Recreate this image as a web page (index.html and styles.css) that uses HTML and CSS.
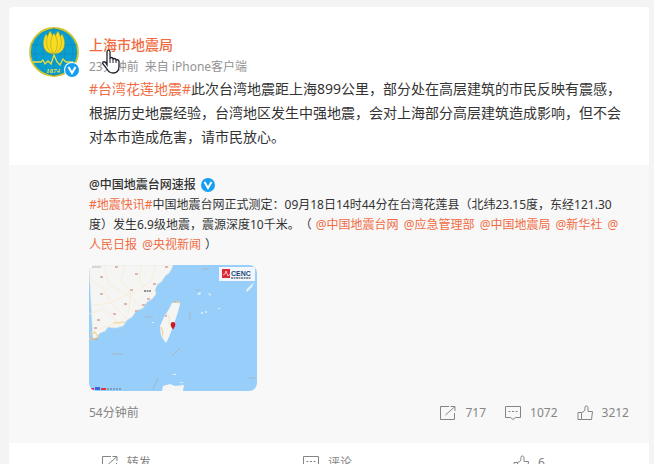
FILE: index.html
```html
<!DOCTYPE html>
<html lang="zh-CN">
<head>
<meta charset="utf-8">
<meta name="viewport" content="width=device-width, initial-scale=1">
<title>上海市地震局</title>
<link rel="stylesheet" href="styles.css">
</head>
<body>
<svg class="defs" aria-hidden="true">
  <symbol id="share" viewBox="0 0 18 16"><path d="M10 1.500H1.500v13h14V8M6.500 10L16 1.500M11.500 1.500H16V6"/></symbol>
  <symbol id="comment" viewBox="0 0 18 16"><path d="M1.500 1.500h15v11h-5L9 14.500l-2.500-2h-5zM4.500 6.500h2M8 6.500h2M11.500 6.500h2"/></symbol>
  <symbol id="like" viewBox="0 0 18 16"><path d="M2 7.500h3.500v7H2zM5.500 7.500c2.500-.5 3.500-2 3.500-4V2c0-1.500 3-1.500 3 .5V6.500h4.500l-1 8h-10"/></symbol>
  <symbol id="verified" viewBox="0 0 16 16"><circle cx="8" cy="8" r="7"/><path d="M4.500 5L8 11l3.500-6"/></symbol>
</svg>
<main class="card">
  <article class="post">
    <a class="avatar" href="#" aria-label="上海市地震局">
      <svg class="avatar-img" viewBox="0 0 50 50" aria-hidden="true">
        <circle cx="25" cy="25" r="24" fill="#0a9fd2" stroke="#d0c52c" stroke-width="1.800"/>
        <g fill="none" stroke="#1585b2" stroke-width=".6"><path d="M2 18h46M2 27h46M5 36h40M25 1v48"/><ellipse cx="25" cy="25" rx="11" ry="23"/><ellipse cx="25" cy="25" rx="19" ry="23"/></g>
        <g fill="#fadb20" stroke="#83a13b" stroke-width=".5">
          <path d="M25 27C12 26 13 14 17 7c4 5 6 12 8 20zM25 27c13-1 12-13 8-20-4 5-6 12-8 20z"/>
          <path d="M24 27C15 21 17 11 21 4c4 5 5 15 3 23zM26 27c9-6 7-16 3-23-4 5-5 15-3 23z"/>
          <path d="M25 27c-5-7-4-15 0-21 4 6 5 14 0 21z"/>
        </g>
        <path d="M4 35h8l2-2 2 4 3-3 3 3 3-9 3 7 3 3 3-6 3 3h7" fill="none" stroke="#eee03b" stroke-width="1.300"/>
        <text x="17" y="46" font-size="7" font-weight="bold" font-style="italic" font-family="Liberation Serif, serif" fill="#eee03b">1874</text>
      </svg>
      <svg class="badge" aria-hidden="true"><use href="#verified"/></svg>
    </a>
    <div class="content">
      <h1 class="name"><a href="#">上海市地震局</a></h1>
      <p class="meta"><span>23分钟前</span><span>来自 iPhone客户端</span></p>
      <p class="text"><a href="#">#台湾花莲地震#</a>此次台湾地震距上海899公里，部分处在高层建筑的市民反映有震感，根据历史地震经验，台湾地区发生中强地震，会对上海部分高层建筑造成影响，但不会对本市造成危害，请市民放心。</p>
    </div>
  </article>
  <section class="quote">
    <h2 class="source"><a href="#">@中国地震台网速报</a><svg class="mark" aria-hidden="true"><use href="#verified"/></svg></h2>
    <p class="quote-text"><a href="#">#地震快讯#</a>中国地震台网正式测定：09月18日14时44分在台湾花莲县（北纬23.15度，东经121.30度）发生6.9级地震，震源深度10千米。（ <a class="mention" href="#">@中国地震台网</a> <a class="mention" href="#">@应急管理部</a> <a class="mention" href="#">@中国地震局</a> <a class="mention" href="#">@新华社</a> <a class="mention" href="#">@人民日报</a> <a class="mention" href="#">@央视新闻</a> ）</p>
    <svg class="map" viewBox="0 0 168 126" role="img" aria-label="震中地图">
      <rect width="168" height="126" fill="#98cefa"/>
      <path d="M0 0h84l-2 5-2 3-4 3-3 5-5 4-2 5 1 4-4 5-5 3-4 6-7 3-4 6-5 3-4 6-8 2-7-1-3 4-5 2-4 5-3 2z" fill="#f5f6f4" stroke="#e4e5df" stroke-width=".7"/>
      <path d="M90 36l-7 2-3 6-5 8-4 9 1 10 5 7 3-6 5-13 4-12 2-8z" fill="#f5f6f4"/>
      <path d="M73 126l1-5 7-2 5 2 9-1-1 6z" fill="#f5f6f4"/>
      <g fill="none" stroke="#f6e8c8" stroke-width=".6"><path d="M1 14l13 9 8 15 16 16M15 1l5 18 18 11 15 12M36 0l-4 16 10 13-3 20M0 49l15-5 11 10 5 8M52 0l-2 17 13 7M67 1l-5 15-16 11-9 3-15 8-18 2M2 67l13-5 17-4 5-7"/></g>
      <path d="M1 70l5-3 3 5-6 3-3-2M24 58l12-1M72 62l2 5-1 5M85 37h6" fill="none" stroke="#f2d294" stroke-width="1.200"/>
      <path d="M77 48q6 4 2 11" fill="none" stroke="#f2dfb4" stroke-width=".8"/>
      <g fill="#dfb3af"><path d="M26 1h3v2h-3zM11 11h3v2h-3zM46 8h3v2h-3zM11 28h3v2h-3zM41 24h3v2h-3zM64 18h3v2h-3zM35 38h3v2h-3zM24 48h3v2h-3zM8 54h3v2H8zM53 39h3v2h-3zM46 45h3v2h-3zM5 62h3v2H5zM76 50h2v2h-2zM58 33h3v2h-3zM76 1h3v2h-3z"/></g>
      <path d="M55 26h7" stroke="#77706d" stroke-width="1.500" stroke-dasharray="2 .6"/>
      <path d="M3 2h9M2 74h7M85 37h5" stroke="#b0a59c" stroke-width="1.200" stroke-dasharray="2 .6"/>
      <g fill="none" stroke="#a6b3c0" stroke-width=".9"><path d="M56 52h8M23 89h11M83 91l8-8M101 46v9M64 124l5-11M113 4h7M106 25h5M160 113h7"/></g>
      <path d="M108 29l3-2 1 2-3 1zM119 28l3 1-1 2zM111 48l3-1v2zM115 47l3-1v2zM129 43h2v1h-2zM157 25l8-8-2 5-5 5zM84 109h3v1h-3zM90 117h5l-2 1zM63 57h2v1h-2z" fill="#e7f1f5"/>
      <path d="M84 63c-2-3-2-5 0-5s2 2 0 5z" fill="#d41525" stroke="#d41525" stroke-width="1.800"/>
      <path d="M130 2h36v14h-36z" fill="#f5f6f9"/>
      <path d="M133 4h8v9h-8z" fill="#db2937"/><path d="M134 10l2-1 1-3 2 5 2-2" fill="none" stroke="#fff" stroke-width=".7"/>
      <text x="142" y="11" font-size="7" font-weight="bold" font-family="Liberation Sans, sans-serif" fill="#164982">CENC</text>
      <path d="M142 13h20" stroke="#647282" stroke-width="1.500" stroke-dasharray="2 .5"/>
      <path d="M2 124h3M12 124h5" stroke="#dc3445" stroke-width="2"/><path d="M6 122h5v3H6z" fill="#3a63e4"/><path d="M18 124h14" stroke="#748daf" stroke-width="1.500" stroke-dasharray="2 1"/>
    </svg>
    <div class="quote-bar">
      <time>54分钟前</time>
      <div class="stats">
        <button type="button" aria-label="转发 717"><svg class="icon" aria-hidden="true"><use href="#share"/></svg>717</button>
        <button type="button" aria-label="评论 1072"><svg class="icon" aria-hidden="true"><use href="#comment"/></svg>1072</button>
        <button type="button" aria-label="赞 3212"><svg class="icon" aria-hidden="true"><use href="#like"/></svg>3212</button>
      </div>
    </div>
  </section>
  <footer class="actions">
    <button type="button"><svg class="icon" aria-hidden="true"><use href="#share"/></svg>转发</button>
    <button type="button"><svg class="icon" aria-hidden="true"><use href="#comment"/></svg>评论</button>
    <button type="button" aria-label="赞 6"><svg class="icon" aria-hidden="true"><use href="#like"/></svg>6</button>
  </footer>
</main>
<svg class="cursor" viewBox="0 0 18 26" aria-hidden="true"><path d="M5 16V3c0-2.500 3-2.500 3 0v7c0-2 3-2 3 0v1c0-2 3-2 3 0v1c0-2 3-1.500 3 .5V17c0 4-2 7-6 7-3 0-4.500-1-6-4l-4-5c-1-2 1-3 2.500-1.500z" fill="#fff" stroke="#22242c" stroke-width="1.300"/><path d="M8 10v4M11 11v3M14 12v2" stroke="#22242c"/></svg>
</body>
</html>
```
FILE: styles.css
```css
* { box-sizing: border-box; }
html { overflow: hidden; }
body {
  margin: 0;
  padding: 7px 5px 0 9px;
  background: #f4f4f4;
  color: #333;
  font-family: "Noto Sans", "Noto Sans CJK SC", sans-serif;
  font-size: 12px;
  line-height: 20px;
  text-spacing-trim: space-all;
}
h1, h2, p { margin: 0; }
a { color: #f06c43; text-decoration: none; }
button {
  display: flex;
  align-items: center;
  gap: 8px;
  padding: 0;
  border: 0;
  background: none;
  color: #858585;
  font: inherit;
}
.defs { position: absolute; width: 0; height: 0; }
.card { background: #fff; border-radius: 4px 4px 0 0; }
.post { display: flex; gap: 10px; padding: 20px 20px 16px; }
.avatar { position: relative; flex: none; width: 50px; height: 50px; }
.avatar-img { display: block; width: 50px; height: 50px; }
.badge {
  position: absolute;
  right: -1px;
  bottom: -1px;
  width: 16px;
  height: 16px;
  border-radius: 50%;
  background: #fff;
}
#verified circle { fill: #169ff0; }
#verified path { fill: none; stroke: #fff; stroke-width: 2; }
.content { flex: 1; padding-top: 6px; }
.name { font-size: 14px; line-height: 24px; font-weight: 500; }
.meta { display: flex; gap: 6px; color: #939393; }
.text { font-size: 14px; line-height: 24px; }
.quote { padding: 10px 20px 20px 80px; background: #f8f8f8; }
.source { display: flex; align-items: center; gap: 4px; font-size: 12px; font-weight: 500; }
.source a { color: #333; }
.mark { width: 16px; height: 16px; }
.mention { margin: 0 1px; }
.map { display: block; width: 168px; height: 126px; margin: 10px 0 12px; border-radius: 8px; }
.quote-bar { display: flex; justify-content: space-between; color: #858585; }
.stats { display: flex; gap: 18px; }
.icon { width: 18px; height: 16px; fill: none; stroke: #858585; stroke-width: 1; }
.actions { display: grid; grid-template-columns: repeat(3, 1fr); padding: 10px 20px 10px 16px; }
.actions button { justify-content: center; }
.cursor { position: absolute; left: 102px; top: 49px; width: 18px; height: 26px; }
```
